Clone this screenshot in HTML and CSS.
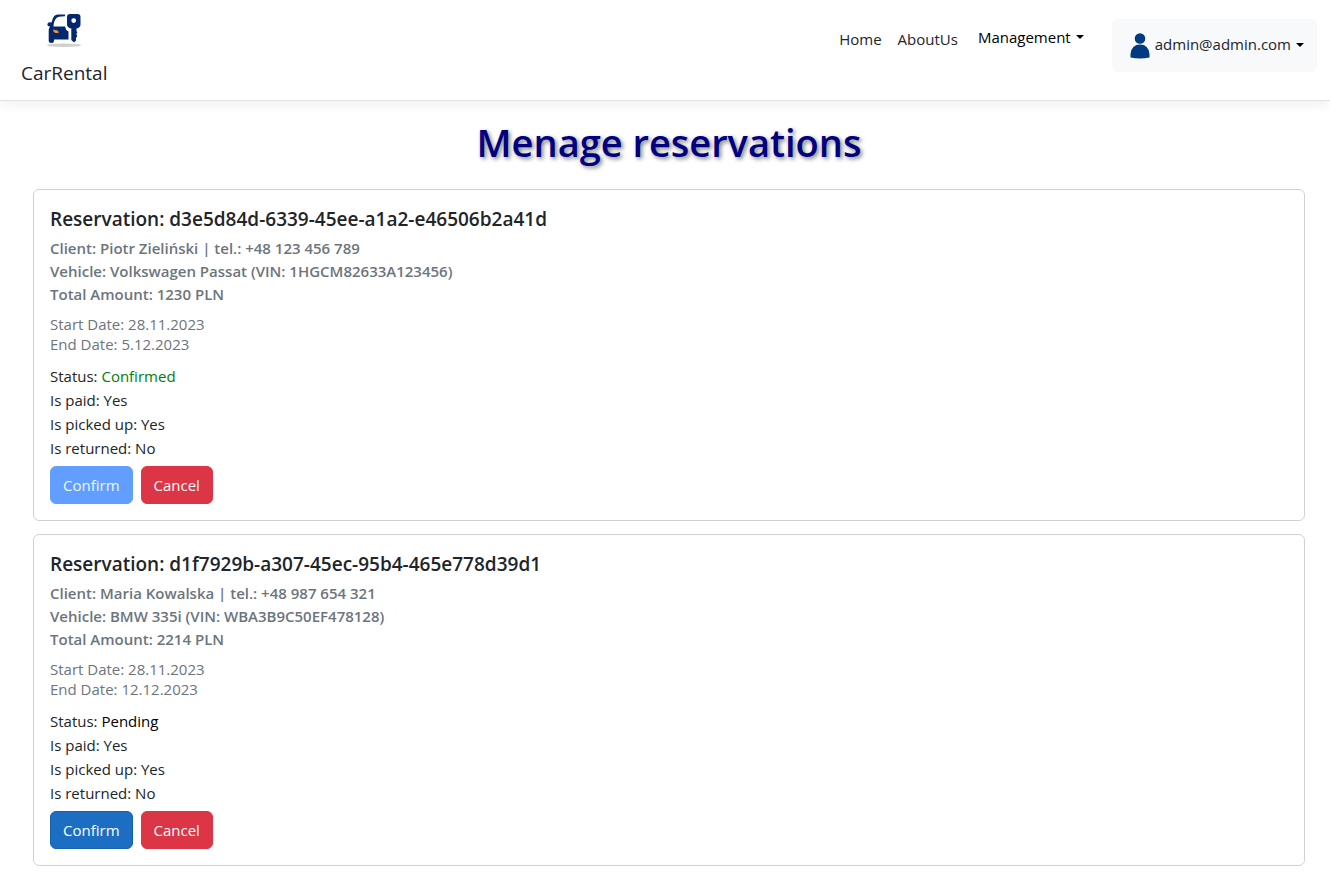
FILE: index.html
```html
<!DOCTYPE html>
<html lang="en">
<head>
<meta charset="utf-8">
<meta name="viewport" content="width=device-width, initial-scale=1">
<title>CarRental</title>
<link rel="stylesheet" href="styles.css">
</head>
<body>
<header class="navbar">
  <a class="brand" href="#">
    <svg class="brand-logo" viewBox="0 0 48 44" aria-hidden="true">
      <ellipse cx="24" cy="37.300" rx="17" ry="1.700" fill="#cfcfcf"/>
      <path fill="#04286f" fill-rule="evenodd" d="M25 6.500H17.500Q14 7 12.800 10.500L11.500 14.500Q7.500 13.800 7.300 16.500Q7.300 18.500 10 18.500Q8.700 20.500 8.700 23V32.500Q8.700 35 11.500 35Q14 35 14 32.500V31.500H28.500V23.500Q25.500 22 25 18.500H13.500Q13.800 13 16 10.500Q17.500 8.200 25 8.200Z"/>
      <path fill="#04286f" fill-rule="evenodd" d="M30 6H37.500Q40.500 6 40.500 9V16.500Q40.500 19.500 36.500 20.500V23L37.300 24.500L36.300 26L37.300 28L36 30V32.500L34 34.500L31.300 32V20.500Q27 19.500 27 16.500V9Q27 6 30 6ZM33.700 10.200A2.400 2.400 0 1 0 33.700 15A2.400 2.400 0 1 0 33.700 10.200Z"/>
      <path fill="#f5941e" d="M13 21.500L17.500 22.500Q19 23.500 18.500 25H15.500Q13.200 24.500 13 21.500Z"/>
    </svg>
    <span>CarRental</span>
  </a>
  <nav class="nav">
    <a class="nav-link" href="#">Home</a>
    <a class="nav-link" href="#">AboutUs</a>
    <button class="nav-toggle" type="button">Management<span class="caret"></span></button>
    <button class="user-menu" type="button">
      <svg class="user-icon" viewBox="0 0 20 26" aria-hidden="true">
        <circle cx="10" cy="5.500" r="5.300" fill="#003a80"/>
        <path fill="#003a80" d="M0.500 24.500V21Q1.500 11.500 10 11.500T19.500 21V24.500Q10 26.500 0.500 24.500Z"/>
      </svg>
      <span class="user-name">admin@admin.com</span><span class="caret"></span>
    </button>
  </nav>
</header>
<main class="page">
  <h1 class="page-title">Menage reservations</h1>
  <section class="reservations">
    <article class="card">
      <h2 class="card-title">Reservation: d3e5d84d-6339-45ee-a1a2-e46506b2a41d</h2>
      <div class="card-details">
        <div>Client: Piotr Zieliński | tel.: +48 123 456 789</div>
        <div>Vehicle: Volkswagen Passat (VIN: 1HGCM82633A123456)</div>
        <div>Total Amount: 1230 PLN</div>
      </div>
      <div class="card-dates">
        <div>Start Date: 28.11.2023</div>
        <div>End Date: 5.12.2023</div>
      </div>
      <div class="card-status">
        <div>Status: <span class="confirmed">Confirmed</span></div>
        <div>Is paid: Yes</div>
        <div>Is picked up: Yes</div>
        <div>Is returned: No</div>
      </div>
      <div class="card-actions">
        <button class="btn btn-confirm" type="button" disabled>Confirm</button>
        <button class="btn btn-cancel" type="button">Cancel</button>
      </div>
    </article>
    <article class="card">
      <h2 class="card-title">Reservation: d1f7929b-a307-45ec-95b4-465e778d39d1</h2>
      <div class="card-details">
        <div>Client: Maria Kowalska | tel.: +48 987 654 321</div>
        <div>Vehicle: BMW 335i (VIN: WBA3B9C50EF478128)</div>
        <div>Total Amount: 2214 PLN</div>
      </div>
      <div class="card-dates">
        <div>Start Date: 28.11.2023</div>
        <div>End Date: 12.12.2023</div>
      </div>
      <div class="card-status">
        <div>Status: <span class="pending">Pending</span></div>
        <div>Is paid: Yes</div>
        <div>Is picked up: Yes</div>
        <div>Is returned: No</div>
      </div>
      <div class="card-actions">
        <button class="btn btn-confirm" type="button">Confirm</button>
        <button class="btn btn-cancel" type="button">Cancel</button>
      </div>
    </article>
  </section>
</main>
</body>
</html>
```

FILE: styles.css
```css
* { box-sizing: border-box; }

body {
  margin: 0;
  background: #fff;
  color: #212529;
  font-family: "Segoe UI", "Open Sans", "Noto Sans", sans-serif;
  font-size: 15px;
  line-height: 24px;
}

button { font: inherit; cursor: pointer; }

.navbar {
  display: flex;
  justify-content: space-between;
  align-items: flex-start;
  padding: 8px 13px 12px 21px;
  border-bottom: 1px solid #dee2e6;
  box-shadow: 0 4px 12px rgba(0, 0, 0, 0.06);
}

.brand {
  display: flex;
  flex-direction: column;
  align-items: center;
  gap: 6px;
  color: #212529;
  font-size: 19px;
  line-height: 30px;
  text-decoration: none;
}

.brand-logo { width: 48px; height: 44px; }

.nav {
  display: flex;
  align-items: flex-start;
  padding-top: 11px;
}

.nav-link {
  padding: 8px;
  color: #212529;
  text-decoration: none;
}

.nav-toggle {
  display: flex;
  align-items: center;
  gap: 5px;
  margin: 0 28px 0 12px;
  padding: 6px 0;
  border: 0;
  background: none;
  color: #000;
}

.caret {
  border-top: 4px solid #000;
  border-left: 4px solid transparent;
  border-right: 4px solid transparent;
}

.user-menu {
  display: flex;
  align-items: center;
  gap: 5px;
  padding: 12px 13px 13px 18px;
  border: 0;
  border-radius: 6px;
  background: #f8f9fb;
  color: #212529;
}

.user-icon { width: 20px; height: 26px; margin-top: 2px; }
.user-name { padding-bottom: 3px; }

.page { padding: 17px 25px 8px 33px; }

.page-title {
  margin: 0 0 23px;
  color: navy;
  font-size: 38px;
  font-weight: 600;
  line-height: 48px;
  text-align: center;
  text-shadow: 2px 2px 4px rgba(0, 0, 0, 0.5);
}

.reservations {
  display: flex;
  flex-direction: column;
  gap: 13px;
}

.card {
  padding: 16px;
  border: 1px solid #d0d1d2;
  border-radius: 6px;
}

.card-title {
  margin: 0 0 5px;
  font-size: 19px;
  font-weight: 600;
  line-height: 26px;
}

.card-details {
  margin-bottom: 8px;
  color: #6c757d;
  font-weight: 600;
  line-height: 23px;
}

.card-dates {
  margin-bottom: 10px;
  color: #6c757d;
  line-height: 20px;
}

.card-status { margin-bottom: 6px; }
.confirmed { color: green; }
.pending { color: #000; }

.card-actions { display: flex; gap: 8px; }

.btn {
  padding: 6px 12px;
  border: 1px solid transparent;
  border-radius: 6px;
  color: #fff;
}

.btn-confirm { border-color: #1861ac; background: #1b6ec2; }
.btn-confirm:disabled { border-color: #619eff; background: #619eff; color: #f0f6ff; }
.btn-cancel { border-color: #dc3545; background: #dc3545; }
```
